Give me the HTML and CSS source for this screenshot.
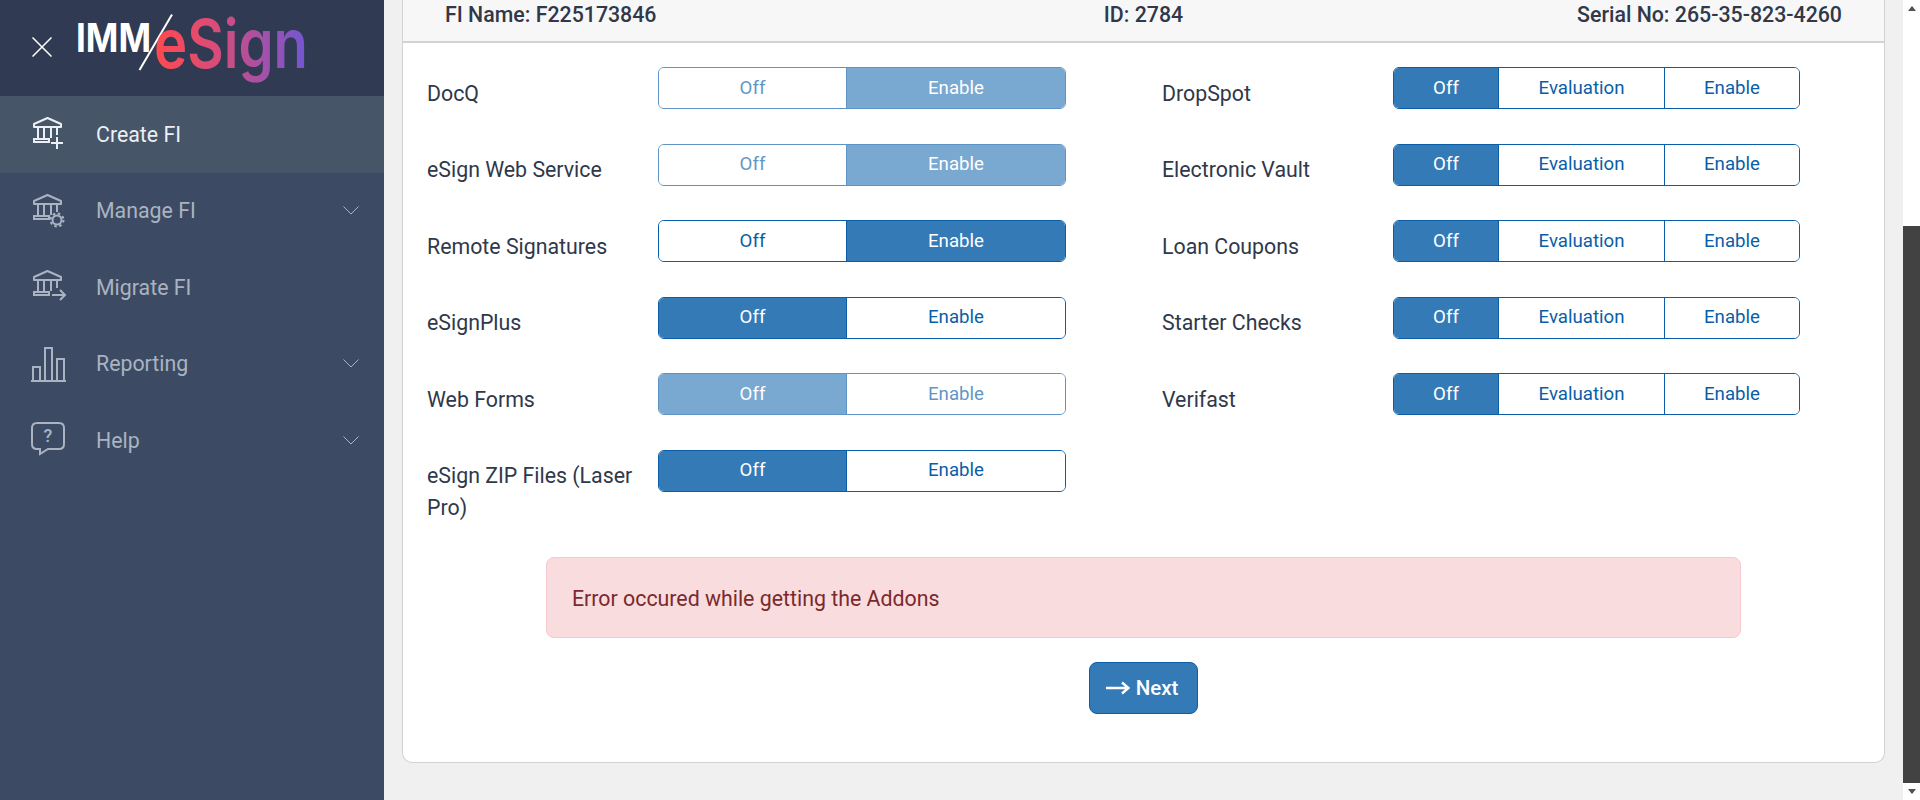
FILE: index.html
```html
<!DOCTYPE html>
<html lang="en">
<head>
<meta charset="utf-8">
<title>IMM eSign - Create FI</title>
<link rel="stylesheet" href="styles.css">
</head>
<body>
<svg class="defs" width="0" height="0" aria-hidden="true">
  <defs>
    <linearGradient id="esign-grad" gradientUnits="userSpaceOnUse" x1="156" y1="0" x2="307" y2="0">
      <stop offset="0" stop-color="#ff4a4f"/>
      <stop offset="0.4" stop-color="#d84c7a"/>
      <stop offset="1" stop-color="#7156d4"/>
    </linearGradient>
    <g id="bank" fill="none" stroke="currentColor" stroke-width="2">
      <path d="M4 13V10L17.500 4L31 10V13H4Z" stroke-linejoin="round"/>
      <path d="M8 14V24M14 14V24M21 14V24M27 14V21"/>
      <path d="M4 28V25H19V28H4Z"/>
    </g>
  </defs>
</svg>
<div class="app">
  <aside class="sidebar">
    <div class="brand">
      <svg class="close-icon" viewBox="0 0 20 20"><path d="M0.5 0.5L19.5 19.5M19.5 0.5L0.5 19.5"/></svg>
      <svg class="logo" viewBox="70 0 314 96">
        <text x="76" y="52" class="logo-imm" textLength="75" lengthAdjust="spacingAndGlyphs">IMM</text>
        <path class="logo-slash" d="M172 14.5L139.5 70"/>
        <text x="154" y="67.500" class="logo-esign" textLength="154" lengthAdjust="spacingAndGlyphs" fill="url(#esign-grad)">eSign</text>
      </svg>
    </div>
    <nav class="nav">
      <a class="nav-item active">
        <svg class="nav-icon" viewBox="0 0 40 40"><use href="#bank"/><path class="ic" d="M21 29H33M27 23V35"/></svg>
        <span class="nav-label">Create FI</span>
      </a>
      <a class="nav-item">
        <svg class="nav-icon" viewBox="0 0 40 40"><use href="#bank"/><circle class="ic" cx="27" cy="29" r="4.500" stroke-width="2.600"/><circle class="ic" cx="27" cy="29" r="6.500" stroke-width="2" stroke-dasharray="2.500 2.600"/></svg>
        <span class="nav-label">Manage FI</span>
        <svg class="chev" viewBox="0 0 16 9"><path d="M0.500 0.500L8 8L15.500 0.500"/></svg>
      </a>
      <a class="nav-item">
        <svg class="nav-icon" viewBox="0 0 40 40"><use href="#bank"/><path class="ic" d="M22 28H35M30 23L35 28L30 33"/></svg>
        <span class="nav-label">Migrate FI</span>
      </a>
      <a class="nav-item">
        <svg class="nav-icon" viewBox="0 0 40 40"><path class="ic" d="M1 37H36M3 36V23H10V36M15 36V4H22V36M27 36V15H34V36"/></svg>
        <span class="nav-label">Reporting</span>
        <svg class="chev" viewBox="0 0 16 9"><path d="M0.500 0.500L8 8L15.500 0.500"/></svg>
      </a>
      <a class="nav-item">
        <svg class="nav-icon" viewBox="0 0 40 40"><path class="ic" d="M7 3H29Q34 3 34 8V24Q34 29 29 29H18L10 34V29H7Q2 29 2 24V8Q2 3 7 3Z"/><text x="18" y="22" class="ic-q">?</text></svg>
        <span class="nav-label">Help</span>
        <svg class="chev" viewBox="0 0 16 9"><path d="M0.500 0.500L8 8L15.500 0.500"/></svg>
      </a>
    </nav>
  </aside>
  <main class="main">
    <section class="card">
      <header class="card-head">
        <span>FI Name: F225173846</span>
        <span>ID: 2784</span>
        <span class="head-right">Serial No: 265-35-823-4260</span>
      </header>
      <div class="addons">
        <div class="row"><div class="label">DocQ</div>
          <div class="group two faded"><button class="seg">Off</button><button class="seg on">Enable</button></div></div>
        <div class="row"><div class="label">DropSpot</div>
          <div class="group three"><button class="seg on">Off</button><button class="seg">Evaluation</button><button class="seg">Enable</button></div></div>
        <div class="row"><div class="label">eSign Web Service</div>
          <div class="group two faded"><button class="seg">Off</button><button class="seg on">Enable</button></div></div>
        <div class="row"><div class="label">Electronic Vault</div>
          <div class="group three"><button class="seg on">Off</button><button class="seg">Evaluation</button><button class="seg">Enable</button></div></div>
        <div class="row"><div class="label">Remote Signatures</div>
          <div class="group two"><button class="seg">Off</button><button class="seg on">Enable</button></div></div>
        <div class="row"><div class="label">Loan Coupons</div>
          <div class="group three"><button class="seg on">Off</button><button class="seg">Evaluation</button><button class="seg">Enable</button></div></div>
        <div class="row"><div class="label">eSignPlus</div>
          <div class="group two"><button class="seg on">Off</button><button class="seg">Enable</button></div></div>
        <div class="row"><div class="label">Starter Checks</div>
          <div class="group three"><button class="seg on">Off</button><button class="seg">Evaluation</button><button class="seg">Enable</button></div></div>
        <div class="row"><div class="label">Web Forms</div>
          <div class="group two faded"><button class="seg on">Off</button><button class="seg">Enable</button></div></div>
        <div class="row"><div class="label">Verifast</div>
          <div class="group three"><button class="seg on">Off</button><button class="seg">Evaluation</button><button class="seg">Enable</button></div></div>
        <div class="row"><div class="label">eSign ZIP Files (Laser Pro)</div>
          <div class="group two"><button class="seg on">Off</button><button class="seg">Enable</button></div></div>
      </div>
      <div class="alert">Error occured while getting the Addons</div>
      <div class="actions">
        <button class="next"><svg class="next-arrow" viewBox="0 0 24 14"><path d="M0 7H22M16 1.500L22.500 7L16 12.500"/></svg>Next</button>
      </div>
    </section>
  </main>
  <div class="scrollbar">
    <div class="sb-btn"><span class="sb-up"></span></div>
    <div class="sb-track"></div>
    <div class="sb-thumb"></div>
    <div class="sb-btn"><span class="sb-down"></span></div>
  </div>
</div>
</body>
</html>
```

FILE: styles.css
```css
* { box-sizing: border-box; }
html, body { margin: 0; height: 800px; overflow: hidden; }
body { font-family: Roboto, "Liberation Sans", sans-serif; background: #f0f0f0; color: #30384a; }
.defs { position: absolute; }
.app { display: flex; height: 800px; }

.sidebar { width: 384px; flex: none; background: #3c4b63; }
.brand { height: 96px; background: #303b53; position: relative; }
.close-icon { position: absolute; left: 32px; top: 37px; width: 20px; height: 20px; fill: none; stroke: #fff; stroke-width: 1.5; }
.logo { position: absolute; left: 70px; top: 0; width: 314px; height: 96px; }
.logo-imm { font-family: Inter, sans-serif; font-weight: 700; font-size: 40px; fill: #fff; }
.logo-slash { stroke: #fff; stroke-width: 2; fill: none; }
.logo-esign { font-family: Inter, sans-serif; font-weight: 600; font-size: 68px; }

.nav { display: flex; flex-direction: column; }
.nav-item { height: 76.5px; display: flex; align-items: center; padding: 0 25px 0 30px; color: #aab3c1; font-size: 21.33px; }
.nav-item.active { background: #475569; color: #eceff4; }
.nav-icon { width: 40px; height: 40px; flex: none; color: inherit; }
.ic { fill: none; stroke: currentColor; stroke-width: 2; }
.ic-q { font-family: Roboto, sans-serif; font-size: 18px; font-weight: 500; fill: currentColor; text-anchor: middle; }
.nav-label { margin-left: 26px; flex: 1; }
.chev { width: 16px; height: 9px; fill: none; stroke: currentColor; stroke-width: 1; flex: none; }

.main { flex: 1; padding: 0 18px; min-width: 0; }
.card { background: #fff; border: 1px solid #d2d2d2; border-top: 0; border-radius: 0 0 10px 10px; height: 763px; }
.card-head { height: 43px; background: #f7f7f7; border-bottom: 2px solid #d2d2d2; display: grid; grid-template-columns: 1fr auto 1fr; padding: 0 42px 13px 42px; align-items: center; font-size: 21.33px; font-weight: 500; color: #30384a; }
.head-right { text-align: right; }

.addons { display: grid; grid-template-columns: 735px 1fr; padding: 24px 0 0 24px; grid-auto-rows: 76.6px; }
.row { display: flex; align-items: flex-start; }
.row:last-child { height: 108px; }
.label { width: 231px; flex: none; font-size: 21.33px; line-height: 32px; padding-top: 10.5px; padding-right: 8px; }

.group { display: flex; height: 42px; width: 408px; border: 1px solid #0a5ea8; border-radius: 6px; overflow: hidden; background: #fff; }
.seg { border: 0; background: #fff; color: #0a5ea8; font: 18.67px Roboto, sans-serif; padding: 0 0 1px; margin: 0; border-left: 1px solid #0a5ea8; }
.seg:first-child { border-left: 0; }
.seg.on { background: #337ab7; color: #fff; }
.two .seg:nth-child(1) { width: 187px; }
.two .seg:nth-child(2) { flex: 1; }
.three { width: 407px; }
.three .seg:nth-child(1) { width: 104px; }
.three .seg:nth-child(2) { width: 166px; }
.three .seg:nth-child(3) { flex: 1; }
.faded { opacity: 0.65; }

.alert { margin: 30px 143px 0 143px; height: 81px; display: flex; align-items: center; padding: 2px 25px 0; background: #f9dcdd; border: 1px solid #f6c9cc; border-radius: 8px; color: #7a2a2e; font-size: 21.33px; }
.actions { display: flex; justify-content: center; margin-top: 24px; }
.next { width: 109px; height: 52px; background: #337ab7; border: 1px solid #0a5ea8; border-radius: 8px; color: #fff; font: 500 20.5px Roboto, sans-serif; display: flex; align-items: center; justify-content: center; gap: 6px; padding: 0 3px 0 0; }
.next-arrow { width: 24px; height: 14px; fill: none; stroke: #fff; stroke-width: 2.4; }

.scrollbar { width: 17px; flex: none; background: #fff; display: flex; flex-direction: column; }
.sb-btn { height: 17px; display: flex; align-items: center; justify-content: center; flex: none; }
.sb-up { width: 0; height: 0; border: 4px solid transparent; border-top: 0; border-bottom: 5px solid #505050; }
.sb-down { width: 0; height: 0; border: 4px solid transparent; border-bottom: 0; border-top: 5px solid #505050; }
.sb-track { height: 209px; flex: none; }
.sb-thumb { flex: 1; background: #424242; }
```
